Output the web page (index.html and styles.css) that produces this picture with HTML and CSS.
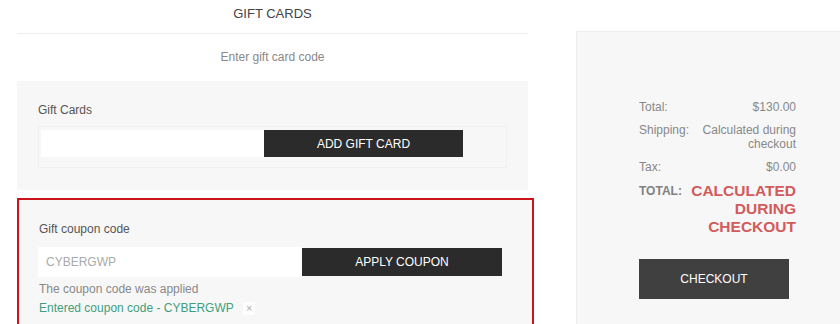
FILE: index.html
```html
<!DOCTYPE html>
<html lang="en">
<head>
    <meta charset="UTF-8">
    <meta name="viewport" content="width=device-width, initial-scale=1.0">
    <title>Gift cards</title>
    <link rel="stylesheet" href="styles.css">
</head>
<body>
    <div class="container">
        <div class="left">
            <div class="title">GIFT CARDS</div>
            <div class="hint">Enter gift card code</div>

            <div class="panel">
                <div class="label">Gift Cards</div>
                <div class="card-box">
                    <input class="field field-card" type="text">
                    <button class="btn btn-card">ADD GIFT CARD</button>
                </div>
            </div>

            <div class="panel coupon">
                <div class="label">Gift coupon code</div>
                <div class="coupon-row">
                    <input class="field field-coupon" type="text" placeholder="CYBERGWP">
                    <button class="btn btn-coupon">APPLY COUPON</button>
                </div>
                <div class="note">The coupon code was applied</div>
                <div class="applied">Entered coupon code - CYBERGWP <span class="remove">&times;</span></div>
            </div>
        </div>

        <div class="right">
            <div class="summary">
                <div class="row">
                    <div class="key">Total:</div>
                    <div class="val">$130.00</div>
                </div>
                <div class="row">
                    <div class="key">Shipping:</div>
                    <div class="val">Calculated during checkout</div>
                </div>
                <div class="row">
                    <div class="key">Tax:</div>
                    <div class="val">$0.00</div>
                </div>
                <div class="row row-total">
                    <div class="key">TOTAL:</div>
                    <div class="val">CALCULATED DURING CHECKOUT</div>
                </div>
                <button class="checkout">CHECKOUT</button>
            </div>
        </div>
    </div>
</body>
</html>
```

FILE: styles.css
```css
html, body {
    height: 100%;
}
* {
    margin: 0;
    padding: 0;
    box-sizing: border-box;
}
body {
    font-family: "Liberation Sans", Arial, sans-serif;
    font-size: 12px;
    color: #666;
    background: #fff;
    overflow: hidden;
}
.container {
    display: flex;
    align-items: flex-start;
}
.left {
    width: 511px;
    margin-left: 17px;
}
.title {
    text-align: center;
    font-size: 13px;
    line-height: 18px;
    color: #444;
    padding: 5px 0 10px;
    border-bottom: 1px solid #eee;
}
.hint {
    text-align: center;
    line-height: 16px;
    color: #888;
    padding: 15px 0 16px;
}
.panel {
    background: #f7f7f7;
    padding: 21px 21px 22px;
}
.label {
    line-height: 16px;
    color: #555;
}
.card-box {
    display: flex;
    margin-top: 8px;
    border: 1px solid #efefef;
    padding: 3px 42px 10px 2px;
}
.field {
    border: none;
    outline: none;
    background: #fff;
    font-family: inherit;
    font-size: 12px;
    color: #999;
}
.field::placeholder {
    color: #aaa;
}
.field-card {
    width: 223px;
    height: 27px;
}
.btn {
    border: none;
    background: #2b2b2b;
    color: #fff;
    font-family: inherit;
    font-size: 12px;
}
.btn-card {
    width: 199px;
    height: 27px;
}
.coupon {
    width: 517px;
    margin-top: 8px;
    border: 2px solid #cc121a;
    padding: 21px 19px 10px 20px;
}
.coupon-row {
    display: flex;
    align-items: center;
    margin-top: 10px;
    margin-left: -1px;
}
.field-coupon {
    width: 264px;
    height: 30px;
    padding-left: 8px;
}
.btn-coupon {
    width: 200px;
    height: 28px;
}
.note {
    margin-top: 3px;
    line-height: 19px;
    color: #888;
}
.applied {
    line-height: 19px;
    color: #3f9e7e;
}
.remove {
    display: inline-block;
    margin-left: 6px;
    padding: 0 3px;
    line-height: 13px;
    font-size: 11px;
    color: #aaa;
    background: #fdfdfd;
}
.right {
    width: 300px;
    height: 320px;
    margin-left: 48px;
    margin-top: 31px;
    background: #f7f7f7;
    border: 1px solid #eee;
    flex-shrink: 0;
}
.summary {
    width: 157px;
    margin-left: 62px;
    margin-top: 68px;
}
.row {
    display: flex;
    justify-content: space-between;
    line-height: 14px;
    color: #888;
    margin-bottom: 9px;
}
.row .val {
    text-align: right;
    max-width: 100px;
}
.row-total {
    margin-top: -1px;
    line-height: 18px;
    font-weight: bold;
}
.row-total .key {
    color: #808080;
    font-size: 12px;
}
.row-total .val {
    color: #d25b5b;
    font-size: 15.5px;
    max-width: 110px;
}
.checkout {
    display: block;
    width: 150px;
    height: 40px;
    margin-top: 23px;
    border: none;
    background: #404040;
    color: #fff;
    font-family: inherit;
    font-size: 12px;
}
```
